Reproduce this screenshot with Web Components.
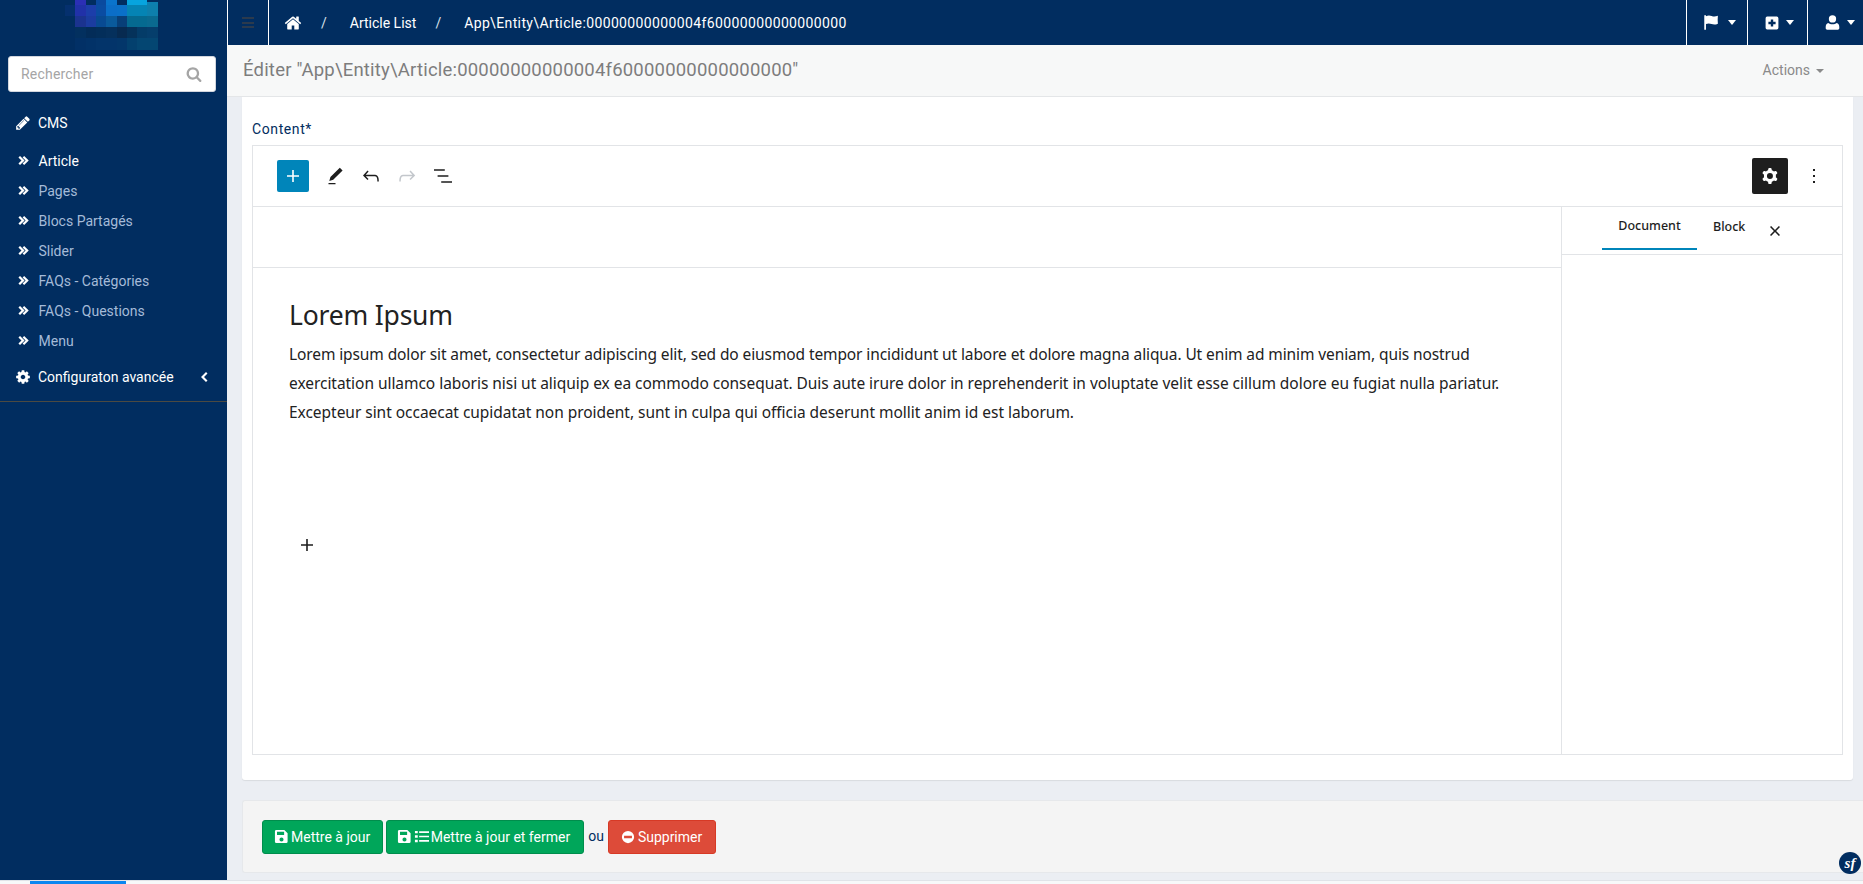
<!DOCTYPE html>
<html lang="fr"><head><meta charset="utf-8"><title>Editer</title>
<style>
html,body{margin:0;padding:0;height:884px;width:1863px;overflow:hidden;background:#fff;font-family:Roboto,"Liberation Sans",sans-serif}
</style></head>
<body>
<app-shell>
  <side-bar slot="side"></side-bar>
  <top-bar slot="top"></top-bar>
  <sub-header slot="sub"></sub-header>
  <content-card slot="card">
    <span slot="label">Content*</span>
    <block-editor></block-editor>
  </content-card>
  <form-actions slot="actions"></form-actions>
</app-shell>
<script>
const P={
home:['0 0 1792 1792','M1472 992v480q0 26-19 45t-45 19h-384v-384h-256v384h-384q-26 0-45-19t-19-45v-480q0-1 .5-3t.5-3l575-474 575 474q1 2 1 6zm223-69l-62 74q-8 9-21 11h-3q-13 0-21-7l-692-577-692 577q-12 8-24 7-13-2-21-11l-62-74q-8-10-7-23.5t11-21.5l719-599q32-26 76-26t76 26l244 204v-195q0-14 9-23t23-9h192q14 0 23 9t9 23v408l219 182q10 8 11 21.5t-7 23.5z'],
search:['0 0 1792 1792','M1216 832q0-185-131.5-316.5t-316.5-131.5-316.5 131.5-131.5 316.5 131.5 316.5 316.5 131.5 316.5-131.5 131.5-316.5zm512 832q0 52-38 90t-90 38q-54 0-90-38l-343-342q-179 124-399 124-143 0-273.5-55.5t-225-150-150-225-55.5-273.5 55.5-273.5 150-225 225-150 273.5-55.5 273.5 55.5 225 150 150 225 55.5 273.5q0 220-124 399l343 343q37 37 37 90z'],
pencil:['0 0 1792 1792','M491 1536l91-91-235-235-91 91v107h128v128h107zm523-928q0-22-22-22-10 0-17 7l-542 542q-7 7-7 17 0 22 22 22 10 0 17-7l542-542q7-7 7-17zm-54-192l416 416-832 832h-416v-416zm683 96q0 53-37 90l-166 166-416-416 166-165q36-38 90-38 53 0 91 38l235 234q37 39 37 91z'],
dbl:['0 -1 12 12','M.5 1.700L2.200 0l5 5-5 5-1.700-1.700L3.800 5zM5 1.700L6.700 0l5 5-5 5L5 8.300 8.300 5z'],
left:['0 0 12 12','M8 1l1.500 1.500L6 6l3.500 3.500L8 11 3 6z'],
cog:['0 0 1792 1792','M1152 896q0-106-75-181t-181-75-181 75-75 181 75 181 181 75 181-75 75-181zm512-109v222q0 12-8 23t-20 13l-185 28q-19 54-39 91 35 50 107 138 10 12 10 25t-9 23q-27 37-99 108t-94 71q-12 0-26-9l-138-108q-44 23-91 38-16 136-29 186-7 28-36 28h-222q-14 0-24.5-8.5t-11.5-21.5l-28-184q-49-16-90-37l-141 107q-10 9-25 9-14 0-25-11-126-114-165-168-7-10-7-23 0-12 8-23 15-21 51-66.5t54-70.5q-27-50-41-99l-183-27q-13-2-21-12.5t-8-23.5v-222q0-12 8-23t19-13l186-28q14-46 39-92-40-57-107-138-10-12-10-24 0-10 9-23 26-36 98.5-107.5t94.5-71.5q13 0 26 10l138 107q44-23 91-38 16-136 29-186 7-28 36-28h222q14 0 24.5 8.5t11.5 21.5l28 184q49 16 90 37l142-107q9-9 24-9 13 0 25 10 129 119 165 170 7 8 7 22 0 12-8 23-15 21-51 66.5t-54 70.5q26 50 41 98l183 28q13 2 21 12.5t8 23.5z'],
flag:['0 0 20 20','M1.500 1.500h2v1c2.200-1 4.500-1 6.700-.2 2.200.8 4.300.9 7.300-.3-.3 3-.3 6 0 9.500-2.800 1.300-5.200 1.200-7.500.4-2.200-.8-4.400-.8-6.500 0V18.500h-2z'],
plussq:['0 0 20 20','M4 2h12a2 2 0 0 1 2 2v12a2 2 0 0 1-2 2H4a2 2 0 0 1-2-2V4a2 2 0 0 1 2-2zm4.500 3.500v3h-3v3h3v3h3v-3h3v-3h-3v-3z'],
user:['0 0 20 20','M10 1.500a4.300 4.300 0 1 1 0 8.600 4.300 4.300 0 0 1 0-8.600zM5 10.500c1.300 1 3 1.500 5 1.500s3.700-.5 5-1.500c1.800.4 3 2.200 3 4.800v1.500c0 1-.8 1.700-1.700 1.700H3.700C2.800 18.500 2 17.800 2 16.800v-1.500c0-2.600 1.200-4.400 3-4.800z'],
save:['0 0 16 16','M2.500 1H11l3.500 3.500V13.500A1.500 1.500 0 0 1 13 15H2.500A1.500 1.500 0 0 1 1 13.500v-11A1.500 1.500 0 0 1 2.500 1zM3.200 3v3.400h7.600V3zM8 9a2.200 2.200 0 1 0 0 4.400A2.200 2.200 0 0 0 8 9z'],
list:['0 0 16 16','M1 2h3v2.600H1zM1 6.700h3v2.600H1zM1 11.400h3V14H1zM5.500 2.400H16v1.800H5.500zM5.500 7.100H16v1.800H5.500zM5.500 11.800H16v1.800H5.500z'],
minus:['0 0 16 16','M8 1a7 7 0 1 1 0 14A7 7 0 0 1 8 1zM3.500 6.500v3h9v-3z'],
gplus:['0 0 24 24','M18 11.200h-5.200V6h-1.600v5.200H6v1.600h5.200V18h1.600v-5.200H18z'],
gedit:['0 0 24 24','M20.100 5.100L16.900 2 6.200 12.700l-1.300 4.400 4.500-1.300L20.100 5.100zM4 20.800h8v-1.500H4v1.500z'],
gundo:['0 0 24 24','M18.300 11.700c-.6-.6-1.400-.9-2.300-.9H6.700l2.900-3.300-1.100-1-4.500 5L8.500 16l1-1-2.700-2.700H16c.5 0 .9.2 1.300.5 1 1 1 3.400 1 4.500v.3h1.500v-.2c0-1.500 0-4.300-1.500-5.700z'],
gredo:['0 0 24 24','M15.600 6.500l-1.100 1 2.900 3.300H8c-.9 0-1.700.3-2.300.9-1.400 1.500-1.400 4.200-1.400 5.600v.2h1.500v-.3c0-1.100 0-3.500 1-4.500.3-.3.7-.5 1.300-.5h9.200L14.500 15l1.100 1.100 4.600-4.600-4.600-5z'],
glist:['0 0 24 24','M13.800 5.200H3v1.500h10.800V5.200zm-3.600 12v1.500H21v-1.500H10.200zm7.200-6H6.600v1.500h10.800v-1.500z'],
gcog:['0 0 24 24','M10.289 4.836A1 1 0 0111.275 4h1.306a1 1 0 01.987.836l.244 1.466c.787.26 1.503.679 2.108 1.218l1.393-.522a1 1 0 011.216.437l.653 1.13a1 1 0 01-.23 1.273l-1.148.944a6.025 6.025 0 010 2.435l1.149.946a1 1 0 01.23 1.272l-.653 1.13a1 1 0 01-1.216.437l-1.394-.522c-.605.54-1.32.958-2.108 1.218l-.244 1.466a1 1 0 01-.987.836h-1.306a1 1 0 01-.986-.836l-.244-1.466a5.995 5.995 0 01-2.108-1.218l-1.394.522a1 1 0 01-1.217-.436l-.653-1.131a1 1 0 01.23-1.272l1.149-.946a6.026 6.026 0 010-2.435l-1.148-.944a1 1 0 01-.23-1.272l.653-1.131a1 1 0 011.217-.437l1.393.522a5.994 5.994 0 012.108-1.218l.244-1.466zM14.929 12a3 3 0 11-6 0 3 3 0 016 0z'],
gmore:['0 0 24 24','M13 19h-2v-2h2v2zm0-6h-2v-2h2v2zm0-6h-2V5h2v2z'],
gx:['0 0 12 12','M1 2.100L2.100 1 6 4.900 9.900 1 11 2.100 7.100 6 11 9.900 9.900 11 6 7.100 2.100 11 1 9.900 4.900 6z']
};
const ic=(n,s,c)=>`<svg width="${s}" height="${s}" viewBox="${P[n][0]}" fill="${c||'currentColor'}" fill-rule="evenodd" style="display:block;flex:none"><path d="${P[n][1]}"/></svg>`;
function def(name,html){
  customElements.define(name,class extends HTMLElement{
    constructor(){super();this.attachShadow({mode:'open'}).innerHTML=typeof html==='function'?html(this):html;}
  });
}
const FONT='Roboto,"Liberation Sans",sans-serif';
const BODY='"Noto Sans","Open Sans",sans-serif';
const NAVY='#012d60';

def('app-shell',`<style>
:host{display:grid;grid-template-columns:227px 1636px;grid-template-rows:880px 4px;width:1863px;height:884px;font-family:${FONT}}
.main{display:flex;flex-direction:column;background:#ebeef3;min-width:0}
.strip{grid-column:1/3;background:#f7f8f9;border-top:1px solid #e0e3e8;box-sizing:border-box;display:flex}
.strip i{display:block;width:96px;margin-left:30px;background:#0a86f0}
.sf{position:absolute;left:1839px;top:852px;width:22px;height:22px}
</style>
<slot name="side"></slot>
<div class="main"><slot name="top"></slot><slot name="sub"></slot><slot name="card"></slot><slot name="actions"></slot></div>
<div class="strip"><i></i></div>
<svg class="sf" viewBox="0 0 22 22"><circle cx="11" cy="11" r="11" fill="#012d60"/><text x="11" y="16" text-anchor="middle" font-family="Liberation Serif" font-style="italic" font-weight="700" font-size="15" fill="#fff">sf</text></svg>`);

def('nav-item',h=>`<style>
:host{display:flex;align-items:center;height:30px;padding-left:18px;font-size:14px;color:${h.hasAttribute('active')?'#fff':'#a5bbd8'}}
svg{margin-right:9.500px;color:#fff}
</style>${ic('dbl',11)}<slot></slot>`);

def('nav-head',h=>`<style>
:host{display:flex;align-items:center;height:30px;padding-left:14.500px;padding-right:17.500px;font-size:14px;color:#fff}
.i{width:23.500px;flex:none}
.t{flex:1}
</style><span class="i">${ic(h.getAttribute('icon'),16)}</span><span class="t"><slot></slot></span>${h.hasAttribute('open')?ic('left',12):''}`);

const cells=[
[0,75,0,11,5,'#2b2fb5'],[0,96,0,10,5,'#0a4a9f'],[0,106,0,11,5,'#0a74cc'],[0,127,0,10,5,'#07a4de'],[0,137,0,10,5,'#07a4de'],[0,147,2,11,3,'#0d7fb0'],
[0,65,5,10,11,'#05306e'],[0,75,5,11,11,'#2131a8'],[0,86,5,10,11,'#1c3eaa'],[0,96,5,10,11,'#0a4ca2'],[0,106,5,11,11,'#0b6ec8'],[0,117,5,10,11,'#0a70c8'],[0,127,5,10,11,'#0584b4'],[0,137,5,10,11,'#0584b4'],[0,147,5,11,11,'#0e7fac'],
[0,75,16,11,11,'#1b338f'],[0,86,16,10,11,'#1b3ca0'],[0,96,16,10,11,'#084a92'],[0,106,16,11,11,'#0a5a9b'],[0,117,16,10,11,'#083f78'],[0,127,16,10,11,'#056a90'],[0,137,16,10,11,'#056a90'],[0,147,16,11,11,'#0a6a90'],
[0,75,27,11,11,'#03305f'],[0,86,27,10,11,'#032c58'],[0,96,27,10,11,'#032e5a'],[0,106,27,11,11,'#05305c'],[0,117,27,10,11,'#072a50'],[0,127,27,10,11,'#05325a'],[0,137,27,10,11,'#043c68'],[0,147,27,11,11,'#053e6c'],
[0,75,38,11,12,'#023066'],[0,86,38,10,12,'#023268'],[0,96,38,10,12,'#03346a'],[0,106,38,11,12,'#03346a'],[0,117,38,10,12,'#03366a'],[0,127,38,10,12,'#03406e'],[0,137,38,10,12,'#044672'],[0,147,38,11,12,'#044672']
].map(c=>`<rect x="${c[1]}" y="${c[2]}" width="${c[3]}" height="${c[4]}" fill="${c[5]}"/>`).join('');

def('search-box',`<style>
:host{display:flex;align-items:center;height:36px;box-sizing:border-box;margin:0 11px 0 8px;padding:0 13px 0 12px;background:#fff;border-radius:3px;border:1px solid #d2d6de;font-size:14px;letter-spacing:.2px;color:#a5a5a5}
span{flex:1}
</style><span>Rechercher</span>${ic('search',16,'#a5a5a5')}`);

def('side-bar',`<style>
:host{display:flex;flex-direction:column;background:${NAVY};height:880px;overflow:hidden;min-width:0}
svg.logo{display:block;flex:none}
search-box{flex:none}
nav-head.a{margin-top:16px}
nav-item.f{margin-top:7.500px}
nav-head.b{margin-top:6.500px}
hr{margin:9px 0 0;border:0;border-top:1px solid #4c4a42;height:0}
</style>
<svg class="logo" width="227" height="56" viewBox="0 0 227 56">${cells}</svg>
<search-box></search-box>
<nav-head class="a" icon="pencil">CMS</nav-head>
<nav-item class="f" active>Article</nav-item>
<nav-item>Pages</nav-item>
<nav-item>Blocs Partagés</nav-item>
<nav-item>Slider</nav-item>
<nav-item>FAQs - Catégories</nav-item>
<nav-item>FAQs - Questions</nav-item>
<nav-item>Menu</nav-item>
<nav-head class="b" icon="cog" open>Configuraton avancée</nav-head>
<hr>`);

def('top-cell',`<style>
:host{display:flex;align-items:center;gap:6px;height:45px;box-sizing:border-box;border-left:1px solid #fff;color:#fff;padding:0 13px 0 16px}
i{display:block;width:0;height:0;border:4.500px solid transparent;border-top:5px solid #fff;border-bottom:0}
</style><slot></slot><i></i>`);

def('top-bar',`<style>
:host{display:flex;align-items:center;height:45px;background:${NAVY};color:#fff;font-size:14px;flex:none}
.burger{display:flex;flex-direction:column;gap:2.500px;justify-content:center;align-items:center;width:42px;height:45px;box-sizing:border-box;border-left:1px solid #fff;border-right:1px solid #fff}
.burger b{display:block;width:12px;height:2px;background:#2b3a4d}
.crumbs{display:flex;align-items:center;flex:1;padding-left:15px}
.sep{color:#d9e0ea;margin:0 23px 0 19px}
.id{letter-spacing:.37px}
.cells{display:flex}
top-cell.a{width:61px;box-sizing:border-box;gap:7.500px}
top-cell.b{width:60px;box-sizing:border-box}
top-cell.c{width:56px;box-sizing:border-box}
</style>
<div class="burger"><b></b><b></b><b></b></div>
<div class="crumbs">${ic('home',18)}<span class="sep">/</span><span>Article List</span><span class="sep">/</span><span class="id">App\\Entity\\Article:00000000000004f60000000000000000</span></div>
<div class="cells"><top-cell class="a">${ic('flag',17)}</top-cell><top-cell class="b">${ic('plussq',16)}</top-cell><top-cell class="c">${ic('user',17)}</top-cell></div>`);

def('sub-header',`<style>
:host{display:flex;align-items:center;justify-content:space-between;height:52px;box-sizing:border-box;background:#f7f8f8;border-bottom:1px solid #e4e6e8;padding:0 39px 2px 16px;color:#7d7d7d;flex:none}
.t{font-size:18.500px;letter-spacing:.2px}
.a{display:flex;align-items:center;gap:6px;font-size:14px;color:#8a8a8a}
i{display:block;width:0;height:0;margin-top:2px;border:4px solid transparent;border-top:4px solid #8a8a8a;border-bottom:0}
</style><span class="t">Éditer "App\\Entity\\Article:00000000000004f60000000000000000"</span><span class="a">Actions<i></i></span>`);

def('content-card',`<style>
:host{display:block;margin:0 10px 0 15px;background:#fff;padding:22px 10px 25px;border-radius:0 0 3px 3px;box-shadow:0 1px 1px rgba(0,0,0,.08);flex:none}
.l{display:block;height:26px;line-height:20px;font-size:14px;font-weight:400;letter-spacing:.6px;color:${NAVY}}
</style><span class="l"><slot name="label"></slot></span><slot></slot>`);

def('icon-btn',h=>`<style>
:host{display:flex;align-items:center;justify-content:center;flex:none;width:24px}
</style>${ic(h.getAttribute('n'),+h.getAttribute('s')||24,h.getAttribute('c')||'#1e1e1e')}`);

def('block-editor',`<style>
:host{display:grid;grid-template-columns:1fr 280px;grid-template-rows:61px 547px;width:1591px;height:610px;box-sizing:border-box;border:1px solid #e2e4e7;color:#1e1e1e}
.tb{grid-column:1/3;display:flex;align-items:center;border-bottom:1px solid #e2e4e7;padding:0 16px 0 24px;gap:12px;box-sizing:border-box;height:61px}
.add{width:32px;height:32px;background:#0085ba;border-radius:2px;display:flex;align-items:center;justify-content:center}
.pen{margin:0 -1px 0 2.500px}
.sp{flex:1}
.st{width:36px;height:36px;background:#1e1e1e;border-radius:2px;display:flex;align-items:center;justify-content:center}
.mr{margin-left:2px}
.body{border-right:1px solid #e2e4e7;display:flex;flex-direction:column;min-width:0}
.tt{height:61px;box-sizing:border-box;flex:none;border-bottom:1px solid #e2e4e7}
h1{margin:0;font:400 26.500px/36px ${BODY};letter-spacing:-.2px;padding:29px 0 0 36px;color:#222}
.p{padding:7px 0 0 36px;font:400 15.500px/29px ${BODY};color:#222;white-space:nowrap}
.p span{display:block}
.l1{letter-spacing:-.105px}.l2{letter-spacing:-.043px}.l3{letter-spacing:-.032px}
.ins{margin:106px 0 0 41.500px}
.side{display:flex;flex-direction:column}
.tabs{display:flex;height:48px;box-sizing:border-box;border-bottom:1px solid #e2e4e7;padding-left:40px;font:500 12.500px ${BODY};color:#1e1e1e;align-items:flex-start}
.tab{width:95px;display:flex;align-items:center;justify-content:center;padding-bottom:5px;box-sizing:border-box;height:43px}
.tab.on{border-bottom:2px solid #0085ba}
.tab.b{width:auto;margin-left:16px}
.x{margin:12px 0 0 17.500px;height:24px}
</style>
<div class="tb">
  <div class="add"><icon-btn n="gplus" c="#fff"></icon-btn></div>
  <icon-btn class="pen" n="gedit" s="21"></icon-btn>
  <icon-btn n="gundo" s="24"></icon-btn>
  <icon-btn n="gredo" s="24" c="#c3c7cc"></icon-btn>
  <icon-btn n="glist" s="24"></icon-btn>
  <span class="sp"></span>
  <div class="st"><icon-btn n="gcog" s="24" c="#fff"></icon-btn></div>
  <icon-btn class="mr" n="gmore" s="24"></icon-btn>
</div>
<div class="body">
  <div class="tt"></div>
  <h1>Lorem Ipsum</h1>
  <div class="p"><span class="l1">Lorem ipsum dolor sit amet, consectetur adipiscing elit, sed do eiusmod tempor incididunt ut labore et dolore magna aliqua. Ut enim ad minim veniam, quis nostrud</span><span class="l2">exercitation ullamco laboris nisi ut aliquip ex ea commodo consequat. Duis aute irure dolor in reprehenderit in voluptate velit esse cillum dolore eu fugiat nulla pariatur.</span><span class="l3">Excepteur sint occaecat cupidatat non proident, sunt in culpa qui officia deserunt mollit anim id est laborum.</span></div>
  <icon-btn class="ins" n="gplus" s="24"></icon-btn>
</div>
<div class="side"><div class="tabs"><span class="tab on">Document</span><span class="tab b">Block</span><icon-btn class="x" n="gx" s="12"></icon-btn></div></div>`);

def('action-btn',h=>`<style>
:host{display:inline-flex;align-items:center;gap:${h.getAttribute('gap')||3}px;height:34px;box-sizing:border-box;padding:0 ${h.getAttribute('pr')||12}px 0 ${h.getAttribute('pl')||11}px;border-radius:3px;color:#fff;font-size:14px;background:${h.getAttribute('bg')};border:1px solid ${h.getAttribute('bd')}}
</style><slot></slot>`);

def('form-actions',`<style>
:host{display:flex;align-items:center;gap:3px;height:73px;box-sizing:border-box;margin:20px 0 0 15px;padding:0 0 0 19px;background:#f4f4f4;border:1px solid #e6e8eb;border-right:0;border-radius:3px 0 0 3px;color:${NAVY};font-size:14px;flex:none}
.ou{margin:0 1px 2px 1px}
</style>
<action-btn bg="#00a65a" bd="#008d4c" pr="11.500" gap="2">${ic('save',15)}Mettre à jour</action-btn>
<action-btn bg="#00a65a" bd="#008d4c" pl="10" pr="13" gap="2">${ic('save',15)}${ic('list',15)}Mettre à jour et fermer</action-btn>
<span class="ou">ou</span>
<action-btn bg="#dd4b39" bd="#d73925" pl="12" pr="13">${ic('minus',14)}Supprimer</action-btn>`);
</script>
</body></html>
